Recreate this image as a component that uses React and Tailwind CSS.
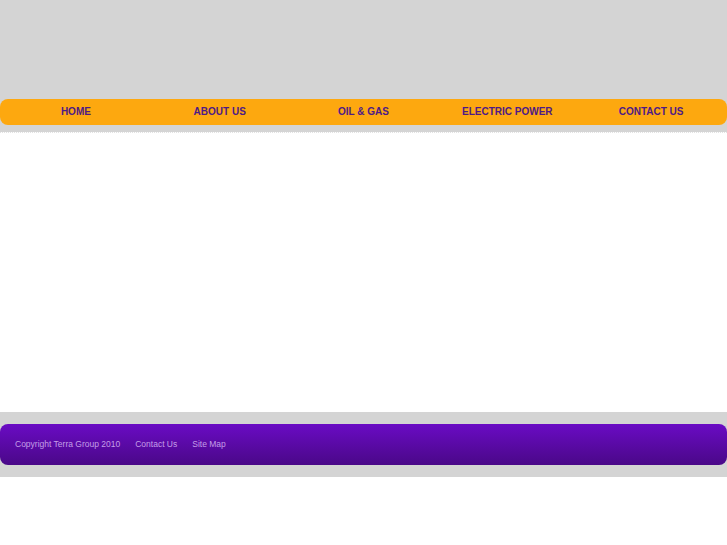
import React from 'react';

const navItems = ['HOME', 'ABOUT US', 'OIL & GAS', 'ELECTRIC POWER', 'CONTACT US'];

export default function App() {
  return (
    <div className="min-h-screen bg-white" style={{ fontFamily: '"Liberation Sans", Arial, sans-serif' }}>
      {/* header */}
      <div className="h-[99px] bg-[#d4d4d4]" />

      {/* nav bar */}
      <div className="bg-[#d4d4d4] pb-[7px]">
        <nav className="h-[26px] rounded-[8px] bg-[#fda80f] grid grid-cols-5 items-center px-[4px]">
          {navItems.map((item) => (
            <a
              key={item}
              href="#"
              className="text-center text-[10px] font-bold text-[#4e1a86] leading-none"
            >
              {item}
            </a>
          ))}
        </nav>
      </div>

      {/* content */}
      <div className="h-[280px] bg-white border-t border-dotted border-[#e2e2e2]" />

      {/* footer */}
      <div className="bg-[#d4d4d4] py-[12px]">
        <footer className="h-[41px] rounded-[8px] bg-gradient-to-b from-[#6a0bc4] to-[#4a0888] flex items-center gap-[15px] px-[15px] text-[8.5px] text-[#c49ee8]">
          <span>Copyright Terra Group 2010</span>
          <span>Contact Us</span>
          <span>Site Map</span>
        </footer>
      </div>
    </div>
  );
}
